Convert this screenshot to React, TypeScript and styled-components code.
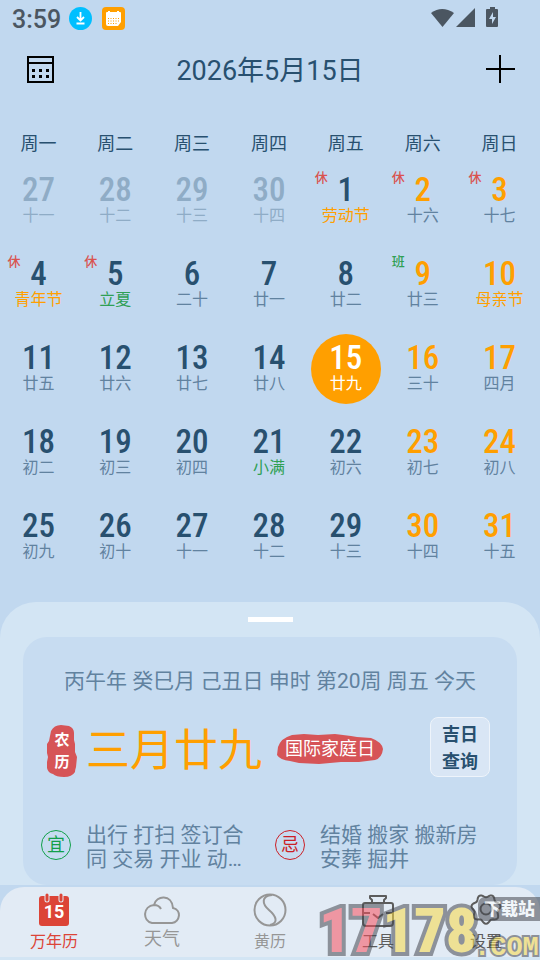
import React from 'react';
import styled, { createGlobalStyle } from 'styled-components';

const Global = createGlobalStyle`
  *, *::before, *::after { box-sizing: border-box; }
  body { margin: 0; background: #c1d8ef; }
  button { font: inherit; color: inherit; background: none; border: 0; padding: 0; cursor: pointer; }
  h1, h2, p { margin: 0; font-weight: inherit; }
`;

const Page = styled.div`
  min-height: 100vh;
  display: flex;
  flex-direction: column;
  background: #c1d8ef;
  color: #28506f;
  font-family: Roboto, 'Noto Sans CJK SC', sans-serif;
`;

const StatusBar = styled.header`
  height: 36px;
  padding: 0 40px 0 12px;
  display: flex;
  align-items: center;
  color: #4b5661;
`;
const Clock = styled.time`
  font-size: 25px;
  line-height: 32px;
  font-weight: 500;
  margin-right: 8px;
  padding-top: 4px;
`;
const StatusIcons = styled.div`
  display: flex;
  gap: 10px;
`;
const SystemIcons = styled.div`
  display: flex;
  margin-left: auto;
`;

const TitleBar = styled.div`
  height: 66px;
  padding: 0 24px;
  display: flex;
  align-items: center;
  justify-content: space-between;
`;
const Title = styled.h1`
  padding-top: 4px;
  font-size: 27px;
  line-height: 36px;
`;
const IconButton = styled.button`
  display: flex;
  width: 32px;
  height: 32px;
`;

const CalendarWrap = styled.main`
  padding: 25px 2px 0 0;
`;
const Calendar = styled.table`
  width: 100%;
  table-layout: fixed;
  border-collapse: collapse;
  text-align: center;
`;
const WeekHead = styled.th`
  height: 32px;
  padding: 2px 0 0;
  font-size: 18px;
  line-height: 30px;
  font-weight: 400;
`;
const Cell = styled.td`
  height: 84px;
  padding: 0;
`;
type Tone = 'n' | 'w' | 'o' | 's';
const Day = styled.button<{ $tone: Tone }>`
  position: relative;
  width: 70px;
  height: 70px;
  border-radius: 50%;
  display: flex;
  flex-direction: column;
  align-items: center;
  margin: 0 auto;
  padding-top: 7px;
  background: ${p => (p.$tone === 's' ? '#ff9f00' : 'transparent')};
  color: ${p => ({ n: '#28506f', w: '#ff9f00', o: '#8facc6', s: '#ffffff' })[p.$tone]};
`;
const DayNumber = styled.span`
  font-family: 'Roboto Condensed', Roboto, sans-serif;
  font-size: 33px;
  line-height: 34px;
  font-weight: 500;
`;
const Lunar = styled.span<{ $color: string }>`
  font-size: 16px;
  line-height: 18px;
  white-space: nowrap;
  color: ${p => p.$color};
`;
const Badge = styled.span<{ $work: boolean }>`
  position: absolute;
  left: 4px;
  top: 3px;
  font-family: 'Noto Sans CJK SC', sans-serif;
  font-size: 13px;
  line-height: 16px;
  font-weight: 500;
  color: ${p => (p.$work ? '#2fa054' : '#d9534f')};
`;

const Sheet = styled.section`
  margin-top: 23px;
  flex: 1;
  display: flex;
  flex-direction: column;
  background: #d3e5f4;
  border-radius: 36px 36px 0 0;
`;
const Handle = styled.button`
  height: 35px;
  display: flex;
  justify-content: center;
  align-items: center;
  &::after { content: ''; width: 45px; height: 5px; background: #fff; }
`;
const Card = styled.article`
  margin: 0 23px;
  padding: 29px 8px 14px 18px;
  border-radius: 24px;
  background: #c7dcf1;
`;
const Ganzhi = styled.p`
  padding-right: 10px;
  font-size: 21px;
  line-height: 30px;
  text-align: center;
  color: #61829f;
  white-space: nowrap;
`;
const LunarRow = styled.div`
  display: flex;
  align-items: center;
  height: 60px;
  margin-top: 21px;
  padding: 0 19px 0 5px;
`;
const Stamp = styled.div<{ $wide?: boolean }>`
  display: grid;
  place-items: center;
  flex: none;
  padding-top: ${p => (p.$wide ? 3 : 7)}px;
  color: #fff;
  font-weight: ${p => (p.$wide ? 400 : 700)};
  font-size: ${p => (p.$wide ? 18 : 15)}px;
  line-height: 22px;
  text-align: center;
  white-space: nowrap;
  & > * { grid-area: 1 / 1; }
`;
const LunarDate = styled.h2`
  margin: 0 15px 0 8px;
  font-family: KaiTi, 'Noto Sans CJK SC', sans-serif;
  font-size: 44px;
  line-height: 56px;
  font-weight: 400;
  color: #ff9f00;
  white-space: nowrap;
`;
const Lookup = styled.button`
  && {
    width: 60px;
    height: 60px;
    margin-left: auto;
    padding-top: 2px;
    border: 1px solid #eef4fb;
    border-radius: 8px;
    background: #d9e6f5;
    font-size: 18px;
    line-height: 27px;
    font-weight: 700;
  }
`;
const Advice = styled.div`
  display: grid;
  grid-template-columns: 1fr 1fr;
  margin-top: 46px;
`;
const AdviceItem = styled.div`
  display: flex;
  align-items: center;
  gap: 15px;
  min-width: 0;
`;
const Round = styled.span<{ $color: string }>`
  flex: none;
  width: 30px;
  height: 30px;
  margin-bottom: 4px;
  border: 1px solid ${p => p.$color};
  border-radius: 50%;
  color: ${p => p.$color};
  font-size: 18px;
  line-height: 28px;
  text-align: center;
`;
const AdviceText = styled.p`
  font-size: 21px;
  line-height: 24px;
  color: #61829f;
  width: 160px;
  display: -webkit-box;
  -webkit-box-orient: vertical;
  -webkit-line-clamp: 2;
  overflow: hidden;
`;

const Footer = styled.footer`
  position: relative;
  padding: 2px 0 3px;
  background: linear-gradient(#c1d8ef 40px, #d3e5f4 40px);
`;
const Tabs = styled.nav`
  display: grid;
  grid-template-columns: repeat(5, 1fr);
  height: 70px;
  border-radius: 24px 24px 0 0;
  background: #e2ebf5;
`;
const TAB_COLORS = { active: '#dc4437', idle: '#969696', dark: '#5c5c5c' };
const Tab = styled.button<{ $tone?: keyof typeof TAB_COLORS; $large?: boolean }>`
  && {
    display: flex;
    flex-direction: column;
    align-items: center;
    padding-top: 4px;
    gap: ${p => (p.$large ? 0 : 3)}px;
    color: ${p => TAB_COLORS[p.$tone ?? 'idle']};
    font-size: ${p => (p.$large ? 18 : 16)}px;
    line-height: 24px;
  }
`;
const Watermark = styled.div`
  position: absolute;
  right: 0;
  bottom: 0;
  opacity: 0.55;
  pointer-events: none;
  display: flex;
`;

const CalendarIcon = () => (
  <svg width="32" height="32" viewBox="0 0 32 32" fill="none" stroke="#000" strokeWidth="2">
    <path d="M4 4h25v25H4zM4 10h25" />
    <path d="M8 17.500h3M15 17.500h3M22 17.500h3M8 23.500h3M15 23.500h3M22 23.500h3" strokeWidth="3" />
  </svg>
);
const PlusIcon = () => (
  <svg width="32" height="32" viewBox="0 0 32 32" stroke="#000" strokeWidth="2">
    <path d="M2 16h29M16 2v28" />
  </svg>
);

const gearPath = Array.from({ length: 84 }, (_, i) => {
  const a = (i / 84) * Math.PI * 2;
  const r = 13.3 - 1.5 * Math.cos(a * 7);
  return `${i ? 'L' : 'M'}${(18 + r * Math.sin(a)).toFixed(2)} ${(18 - r * Math.cos(a)).toFixed(2)}`;
}).join('') + 'Z';

const WEEK = ['周一', '周二', '周三', '周四', '周五', '周六', '周日'];
const LUNAR = '十一 十二 十三 十四 劳动节 十六 十七 青年节 立夏 二十 廿一 廿二 廿三 母亲节 廿五 廿六 廿七 廿八 廿九 三十 四月 初二 初三 初四 小满 初六 初七 初八 初九 初十 十一 十二 十三 十四 十五'.split(' ');
const REST = [1, 2, 3, 4, 5];
const DAYS = LUNAR.map((lunar, i) => {
  const outside = i < 4;
  const day = outside ? 27 + i : i - 3;
  const tone: Tone = outside ? 'o' : day === 15 ? 's' : i % 7 > 4 ? 'w' : 'n';
  const color = outside
    ? '#8facc6'
    : tone === 's'
      ? '#ffffff'
      : lunar.length === 3
        ? '#ff9f00'
        : lunar === '立夏' || lunar === '小满'
          ? '#2fa054'
          : '#61829f';
  const badge = outside ? '' : REST.includes(day) ? '休' : day === 9 ? '班' : '';
  return { day, lunar, tone, color, badge };
});

export default function App() {
  return (
    <Page>
      <Global />
      <StatusBar>
        <Clock>3:59</Clock>
        <StatusIcons>
          <svg width="23" height="23" viewBox="0 0 23 23">
            <circle cx="11.5" cy="11.5" r="11.5" fill="#00bfff" />
            <path d="M11.500 5v8M8 10l3.500 3.500L15 10M7.500 16.500h8" fill="none" stroke="#fff" strokeWidth="1.800" />
          </svg>
          <svg width="23" height="23" viewBox="0 0 23 23">
            <rect width="23" height="23" rx="4" fill="#ff9f00" />
            <path d="M4 6q0-1 1-1h1V4h2v1h7V4h2v1h1q1 0 1 1v9l-3 4H6q-2 0-2-2z" fill="#fff" />
            <path d="M6 11.500h11M6 14h11M6 16.500h9" stroke="#ff9f00" strokeDasharray="1 1.500" />
          </svg>
        </StatusIcons>
        <SystemIcons>
          <svg width="70" height="22" viewBox="0 0 70 22" fill="currentColor">
            <path d="M1 6Q12 -2 24 6L12.500 20z" />
            <path d="M45 1v19H26z" />
            <path d="M60 2V0h5v2h2q1 0 1 1v16q0 1-1 1H57q-1 0-1-1V3q0-1 1-1z" />
            <path d="M63 5l-4 7h3v5l4-7h-3z" fill="#c1d8ef" />
          </svg>
        </SystemIcons>
      </StatusBar>

      <TitleBar>
        <IconButton aria-label="月历"><CalendarIcon /></IconButton>
        <Title>2026年5月15日</Title>
        <IconButton aria-label="添加"><PlusIcon /></IconButton>
      </TitleBar>

      <CalendarWrap>
        <Calendar>
          <thead>
            <tr>{WEEK.map(w => <WeekHead key={w} scope="col">{w}</WeekHead>)}</tr>
          </thead>
          <tbody>
            {[0, 1, 2, 3, 4].map(r => (
              <tr key={r}>
                {DAYS.slice(r * 7, r * 7 + 7).map(d => (
                  <Cell key={d.day}>
                    <Day $tone={d.tone}>
                      {d.badge && <Badge $work={d.badge === '班'}>{d.badge}</Badge>}
                      <DayNumber>{d.day}</DayNumber>
                      <Lunar $color={d.color}>{d.lunar}</Lunar>
                    </Day>
                  </Cell>
                ))}
              </tr>
            ))}
          </tbody>
        </Calendar>
      </CalendarWrap>

      <Sheet>
        <Handle aria-label="展开" />
        <Card>
          <Ganzhi>丙午年 癸巳月 己丑日 申时 第20周 周五 今天</Ganzhi>
          <LunarRow>
            <Stamp>
              <svg width="32" height="54" viewBox="0 0 32 54">
                <path d="M5 7Q8 1 15 1L23 2Q28 4 28 9L28 16L29 20L29 28L31 33L30 43Q29 46 29 48Q26 53 18 53Q10 53 7 50Q2 49 1 44L1 38L2 33L1 29L1 20L3 17L4 12Z" fill="#d65457" />
              </svg>
              <span>农<br />历</span>
            </Stamp>
            <LunarDate>三月廿九</LunarDate>
            <Stamp $wide>
              <svg width="106" height="32" viewBox="0 0 106 32">
                <path d="M1 14Q4 5 15 2L27 1L41 2L58 1L74 3L80 4L94 5Q105 9 106 16Q105 25 98 27L82 29L64 29L42 31L22 30L13 28Q3 27 0 22Z" fill="#d65457" />
              </svg>
              <span>国际家庭日</span>
            </Stamp>
            <Lookup>吉日<br />查询</Lookup>
          </LunarRow>
          <Advice>
            <AdviceItem>
              <Round $color="#12a04a">宜</Round>
              <AdviceText>出行 打扫 签订合同 交易 开业 动土 安床 入宅</AdviceText>
            </AdviceItem>
            <AdviceItem>
              <Round $color="#cc1f26">忌</Round>
              <AdviceText>结婚 搬家 搬新房 安葬 掘井</AdviceText>
            </AdviceItem>
          </Advice>
        </Card>
      </Sheet>

      <Footer>
        <Tabs>
          <Tab $tone="active">
            <svg width="36" height="36" viewBox="0 0 36 36">
              <rect x="3" y="5" width="30" height="30" rx="3" fill="#dc4437" />
              <path d="M11 4v5M25 4v5" stroke="#e2ebf5" strokeWidth="5" strokeLinecap="round" />
              <path d="M11 4v5M25 4v5" stroke="#dc4437" strokeWidth="3" strokeLinecap="round" />
              <text x="18" y="27" textAnchor="middle" fontFamily="Roboto" fontSize="18" fontWeight="700" fill="#fff">15</text>
            </svg>
            万年历
          </Tab>
          <Tab $large>
            <svg width="36" height="36" viewBox="0 0 36 36" fill="none" stroke="currentColor" strokeWidth="2">
              <path d="M8 32C-2 30-1 15 10 14C12 4 28 3 29 17C38 19 36 31 28 32zM10 14q5 0 7 4" />
            </svg>
            天气
          </Tab>
          <Tab>
            <svg width="36" height="36" viewBox="0 0 36 36" fill="none" stroke="currentColor" strokeWidth="2">
              <circle cx="18" cy="19" r="15.5" />
              <path d="M20 4C9 5 10 13 17 19S27 32 18 34" />
            </svg>
            黄历
          </Tab>
          <Tab $tone="dark">
            <svg width="36" height="36" viewBox="0 0 36 36" fill="none" stroke="currentColor" strokeWidth="2" strokeLinejoin="round">
              <path d="M12 12V9L10 7V5H26V7L24 9V12M5 12H31Q33 12 33 14V32Q33 35 30 35H6Q3 35 3 32V14Q3 12 5 12ZM3 22H10M26 22H33M13 23L18 27L23 23" />
            </svg>
            工具
          </Tab>
          <Tab $tone="dark">
            <svg width="36" height="36" viewBox="0 0 36 36" fill="none" stroke="currentColor" strokeWidth="2" strokeLinejoin="round">
              <circle cx="18" cy="18" r="5.5" />
              <path d={gearPath} />
            </svg>
            设置
          </Tab>
        </Tabs>
        <Watermark aria-hidden="true">
          <svg width="226" height="66" viewBox="0 0 226 66" stroke="#464951" strokeWidth="8" strokeLinejoin="miter" paintOrder="stroke">
            <text x="5" y="58" fontFamily="'Roboto Condensed', Roboto" fontWeight="900" fontSize="62" fill="#f8da48">
              <tspan fill="#f85260">17</tspan>178
            </text>
            <rect x="164" y="3" width="70" height="24" rx="7" fill="#464951" stroke="none" />
            <text x="170" y="21" fontFamily="'Noto Sans CJK SC'" fontWeight="900" fontSize="17" fill="#fff" stroke="none">下载站</text>
            <text x="160" y="61" fontFamily="'Liberation Mono'" fontWeight="700" fontSize="27" fill="#f8da48" strokeWidth="4">.COM</text>
          </svg>
        </Watermark>
      </Footer>
    </Page>
  );
}
